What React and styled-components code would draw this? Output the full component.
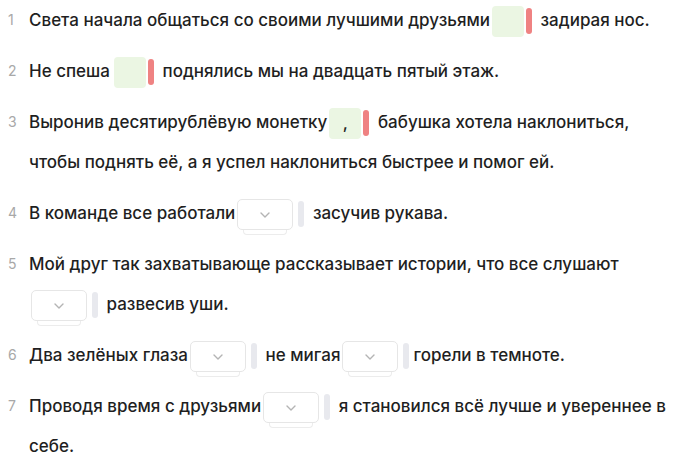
import styled, { createGlobalStyle } from 'styled-components';

const GlobalStyle = createGlobalStyle`
    body {
        margin: 0;
        background: #fff;
        font-family: Inter, "Noto Sans", sans-serif;
    }
`;

const List = styled.div`
    display: flex;
    flex-direction: column;
    gap: 11px;
    width: 676px;
`;

const Item = styled.div`
    display: flex;
    align-items: flex-start;
`;

const Num = styled.span`
    flex: 0 0 29px;
    box-sizing: border-box;
    padding-left: 8px;
    line-height: 40px;
    font-size: 14px;
    color: #a8a8a8;
`;

const Text = styled.div`
    flex: 1;
    font-size: 17px;
    font-weight: 500;
    line-height: 40px;
    color: #1f1f1f;
`;

const Gap = styled.span`
    display: inline-flex;
    align-items: center;
    gap: ${p => p.$select ? '5px' : '2px'};
    vertical-align: middle;
    margin: 0 4px 0 ${p => p.$lead ? '4px' : '2px'};
`;

const Answer = styled.span`
    display: inline-flex;
    align-items: center;
    justify-content: center;
    width: 32px;
    height: 31px;
    border-radius: 4px;
    background: #ebf6e3;
    color: #1f1f1f;
    line-height: 1;
`;

const Mark = styled.span`
    display: inline-block;
    width: 6px;
    height: 26px;
    border-radius: 3px;
    background: ${p => p.$wrong ? '#ef8282' : '#e8e9ee'};
`;

const Select = styled.span`
    position: relative;
    display: inline-flex;
    align-items: center;
    justify-content: center;
    box-sizing: border-box;
    width: 56px;
    height: 31px;
    border: 1px solid #e6e6e6;
    border-radius: 5px;
    background: #fff;

    &::after {
        content: '';
        position: absolute;
        left: 5px;
        right: 5px;
        bottom: -6px;
        height: 8px;
        border: 1px solid #ececec;
        border-top: none;
        border-radius: 0 0 4px 4px;
        background: #fff;
        z-index: -1;
    }
`;

const Chevron = () => (
    <svg width="10" height="6" viewBox="0 0 10 6" fill="none" style={{ marginTop: 2 }}>
        <path d="M1 1l4 4 4-4" stroke="#b4b4b4" strokeWidth="1.4" strokeLinecap="round" strokeLinejoin="round" />
    </svg>
);

function Filled({ value, lead }) {
    return (
        <Gap $lead={lead}>
            <Answer>{value}</Answer>
            <Mark $wrong />
        </Gap>
    );
}

function Dropdown() {
    return (
        <Gap $select>
            <Select><Chevron /></Select>
            <Mark />
        </Gap>
    );
}

const items = [
    <>Света начала общаться со своими лучшими друзьями<Filled /> задирая нос.</>,
    <>Не спеша<Filled lead /> поднялись мы на двадцать пятый этаж.</>,
    <>Выронив десятирублёвую монетку<Filled value="," /> бабушка хотела наклониться, чтобы поднять её, а я успел наклониться быстрее и помог ей.</>,
    <>В команде все работали<Dropdown /> засучив рукава.</>,
    <>Мой друг так захватывающе рассказывает истории, что все слушают <Dropdown /> развесив уши.</>,
    <>Два зелёных глаза<Dropdown /> не мигая<Dropdown />горели в темноте.</>,
    <>Проводя время с друзьями<Dropdown /> я становился всё лучше и увереннее в себе.</>,
];

export default function App() {
    return (
        <>
            <GlobalStyle />
            <List>
                {items.map((content, i) => (
                    <Item key={i}>
                        <Num>{i + 1}</Num>
                        <Text>{content}</Text>
                    </Item>
                ))}
            </List>
        </>
    );
}
